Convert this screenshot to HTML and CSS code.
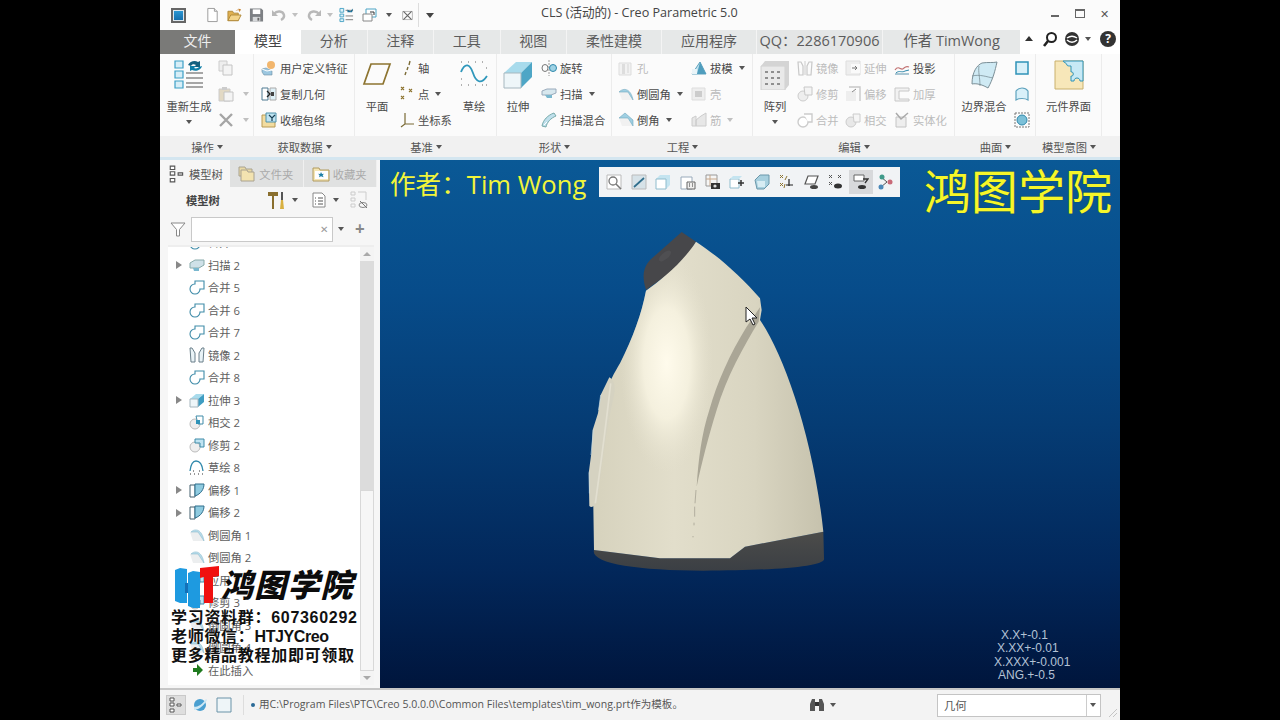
FILE: index.html
```html
<!DOCTYPE html>
<html lang="zh">
<head>
<meta charset="utf-8">
<title>CLS (活动的) - Creo Parametric 5.0</title>
<link rel="stylesheet" href="styles.css">
</head>
<body>
<svg class="defs" aria-hidden="true">
<defs>
<symbol id="doc" viewBox="0 0 16 16"><path d="M3 1h7l3 3v11H3z" fill="#fff" stroke="#999"/><path d="M10 1v3h3" fill="#eee" stroke="#999"/></symbol>
<symbol id="open" viewBox="0 0 16 16"><path d="M1 14V4h5l1 2h5v8z" fill="#e0b050" stroke="#b08a3a"/><path d="M1 14l3-6h11l-3 6z" fill="#f3d48a" stroke="#b08a3a"/><path d="M9 4c1-2 3-2 4-2l-1-1 3 1-2 3V3c-2 0-3 0-4 1z" fill="#c47a20"/></symbol>
<symbol id="save" viewBox="0 0 16 16"><path d="M1 1h12l2 2v12H1z" fill="#7d8084"/><path d="M4 2h8v5H4z" fill="#fff"/><path d="M4 10h8v5H4z" fill="#d6d8da"/><path d="M9 11h2v3H9z" fill="#666"/></symbol>
<symbol id="undo" viewBox="0 0 16 16"><path d="M3 7c3-4 9-3 10 1 .4 2-1 4-3 5" fill="none" stroke="#b8b8b8" stroke-width="2.4"/><path d="M1 3v6h6z" fill="#b8b8b8"/></symbol>
<symbol id="redo" viewBox="0 0 16 16"><path d="M13 7C10 3 4 4 3 8c-.4 2 1 4 3 5" fill="none" stroke="#b8b8b8" stroke-width="2.4"/><path d="M15 3v6H9z" fill="#b8b8b8"/></symbol>
<symbol id="regen-s" viewBox="0 0 16 16"><path d="M1 1h4v4H1zM1 7h4v3H1zM1 12h4v3H1z" fill="#dff1f8" stroke="#4aa3c4"/><path d="M7 3h8M7 9h8M7 13h8" stroke="#777"/><path d="M9 2l3 2 3-3-1 4H9z" fill="#1d6f96"/></symbol>
<symbol id="windows" viewBox="0 0 16 16"><path d="M4 2h10v8H4z" fill="#fff" stroke="#4aa3c4"/><path d="M1 7h9v7H1z" fill="#fff" stroke="#888"/><path d="M8 5h4v3" fill="none" stroke="#333"/></symbol>
<symbol id="closew" viewBox="0 0 16 16"><path d="M2 3h12v10H2z" fill="none" stroke="#aaa"/><path d="M3 3l10 10M13 3L3 13" stroke="#666" stroke-width="1.4"/></symbol>
<symbol id="regen" viewBox="0 0 30 30"><path d="M1 1h8v7H1zM1 11h8v7H1zM1 21h8v7H1z" fill="#d7eef7" stroke="#3d9fc6" stroke-width="1.2"/><path d="M12 14h17M12 19h17M12 24h17M12 28h17" stroke="#8a8a8a" stroke-width="1.3" transform="translate(0 -1)"/><path d="M14 5c2-4 7-5 10-3l2-1v6h-6l2-2c-2-1-4-1-5 1z" fill="#14607f"/><path d="M28 6c-1 4-6 6-10 4l-2 1V6h6l-2 2c2 1 4 0 5-1z" fill="#0d7ea8"/></symbol>
<symbol id="copy" viewBox="0 0 16 16"><path d="M1 1h8v10H1z" fill="#eee" stroke="#ccc"/><path d="M5 5h9v10H5z" fill="#f4f4f4" stroke="#c4c4c4"/></symbol>
<symbol id="paste" viewBox="0 0 16 16"><path d="M1 3h11v12H1z" fill="#e2d9c4" stroke="#ccc"/><path d="M4 1h5v3H4z" fill="#ccc"/><path d="M6 6h9v9H6z" fill="#f4f4f4" stroke="#c4c4c4"/></symbol>
<symbol id="del" viewBox="0 0 16 16"><path d="M2 2l12 12M14 2L2 14" stroke="#a5a5a5" stroke-width="2.4"/></symbol>
<symbol id="udf" viewBox="0 0 16 16"><circle cx="10" cy="5" r="4" fill="#f2b66d"/><path d="M5 8l6 3v4H3l-2-3V9z" fill="#9cc7e0" stroke="#6b8ea3" stroke-width=".6"/><path d="M1 9l5 2 5-1" fill="none" stroke="#fff"/></symbol>
<symbol id="cgeom" viewBox="0 0 16 16"><path d="M1 2h6v12H1z" fill="#fff" stroke="#4f7b92"/><path d="M9 2h6v12H9z" fill="#dff1f8" stroke="#aaa"/><path d="M6 5l3 3-3 3" fill="none" stroke="#222" stroke-width="1.3"/><path d="M10 6h3v4h-3z" fill="#444"/></symbol>
<symbol id="shrink" viewBox="0 0 16 16"><path d="M1 3h13v12H1z" fill="#f2dca0" stroke="#b89a55"/><path d="M5 1h10v9H5z" fill="#bfe3f1" stroke="#4f91aa"/><path d="M8 3l3 3 3-3M11 6v3" stroke="#173f55" stroke-width="1.2" fill="none"/></symbol>
<symbol id="plane" viewBox="0 0 30 30"><path d="M9 4h19l-7 20H2z" fill="none" stroke="#8d7430" stroke-width="1.7"/></symbol>
<symbol id="axis" viewBox="0 0 16 16"><path d="M11 1l-1 4M9 7L8 10M7 12l-1 3" stroke="#7a6a35" stroke-width="1.4"/></symbol>
<symbol id="pt" viewBox="0 0 16 16"><path d="M2 1l3 3M5 1L2 4M10 3l3 3M13 3l-3 3M2 10l3 3M5 10l-3 3" stroke="#8d7430" stroke-width="1.1"/></symbol>
<symbol id="csys" viewBox="0 0 16 16"><path d="M6 1v11L2 15M6 12h9" fill="none" stroke="#7a6a35" stroke-width="1.2"/></symbol>
<symbol id="sketch" viewBox="0 0 30 30"><path d="M2 12C6 2 11 4 14 13s8 12 14 3" fill="none" stroke="#2f97bb" stroke-width="1.8"/><path d="M2 2h1M9 2h1M16 2h1M23 2h1M2 25h1M9 25h1M16 25h1M23 25h1M2 19h1M27 8h1M27 25h1" stroke="#666" stroke-width="1"/></symbol>
<symbol id="extrude" viewBox="0 0 30 30"><path d="M1 13L13 2h16L18 13z" fill="#a8dbec"/><path d="M18 13L29 2v15L18 28z" fill="#4ea6c6"/><path d="M1 13h17v15H1z" fill="#eef6f9" stroke="#a6b7bf"/></symbol>
<symbol id="revolve" viewBox="0 0 16 16"><path d="M8 0v16" stroke="#999" stroke-dasharray="2 1"/><ellipse cx="4" cy="8" rx="3" ry="3.5" fill="none" stroke="#777"/><ellipse cx="12" cy="8" rx="3.5" ry="3.5" fill="#9fd2e4" stroke="#2f88ab"/></symbol>
<symbol id="sweep" viewBox="0 0 16 16"><path d="M1 5l5-2h9v4l-5 2H1z" fill="#d7e7ee" stroke="#9ab"/><path d="M4 9h7v3H6z" fill="#7ab8cf"/></symbol>
<symbol id="sblend" viewBox="0 0 16 16"><path d="M1 14C2 8 7 3 13 1l2 3C10 6 6 10 5 15z" fill="#bfe0ec" stroke="#7aa"/><path d="M3 13l3-3" stroke="#fff"/></symbol>
<symbol id="hole" viewBox="0 0 16 16"><path d="M1 3h12v12H1z" fill="#f2f2f2" stroke="#ddd"/><path d="M4 4h3v10H4z" fill="#ddd"/><path d="M9 4h2v9H9z" fill="#e4e4e4"/></symbol>
<symbol id="round" viewBox="0 0 16 16"><path d="M1 6h9l5 8H4z" fill="#f1f1f1"/><path d="M1 6c5-5 12-3 14 8l-5-8z" fill="#9fcfe2" stroke="#6fa8bf" stroke-width=".6"/></symbol>
<symbol id="chamfer" viewBox="0 0 16 16"><path d="M1 6h9l5 8H4z" fill="#f1f1f1"/><path d="M1 6l6-5 8 7v6l-5-8z" fill="#9fcfe2" stroke="#6fa8bf" stroke-width=".6"/></symbol>
<symbol id="draft" viewBox="0 0 16 16"><path d="M1 14L9 2l6 12z" fill="#bfe2ef" stroke="#5ea2bd"/><path d="M9 2l-3 12h9z" fill="#4f9dbd"/><path d="M1 9h5v5H1z" fill="#e9f4f8"/></symbol>
<symbol id="shell" viewBox="0 0 16 16"><path d="M1 2h13v12H1z" fill="#eee" stroke="#ddd"/><path d="M4 5h7v6H4z" fill="#ccc"/></symbol>
<symbol id="rib" viewBox="0 0 16 16"><path d="M1 6l4-2v10H1zM5 8l5-4 5-3v13H5z" fill="#e7e7e7" stroke="#ccc"/></symbol>
<symbol id="pattern" viewBox="0 0 30 30"><path d="M1 6h24v24H1z" fill="#e9e9e9" stroke="#d0d0d0"/><path d="M1 6l4-5h24l-4 5zM25 6l4-5v24l-4 5z" fill="#d4d4d4"/><path d="M5 11h3v2H5zM11 11h3v2h-3zM17 11h3v2h-3zM5 17h3v2H5zM11 17h3v2h-3zM17 17h3v2h-3zM5 23h3v2H5zM11 23h3v2h-3zM17 23h3v2h-3z" fill="#8f8f8f"/></symbol>
<symbol id="mirror" viewBox="0 0 16 16"><path d="M1 2h3l2 4v9H2zM15 2h-3l-2 4v9h4z" fill="none" stroke="#c8c8c8" stroke-width="1.2"/><path d="M8 1v14" stroke="#ccc"/></symbol>
<symbol id="trim" viewBox="0 0 16 16"><circle cx="6" cy="10" r="5" fill="#eee" stroke="#ccc"/><path d="M7 1h8v8H8z" fill="#f4f4f4" stroke="#c8c8c8"/></symbol>
<symbol id="merge" viewBox="0 0 16 16"><circle cx="6" cy="10" r="5" fill="#fff" stroke="#ccc" stroke-width="1.4"/><path d="M7 2h8v8h-4" fill="#fff" stroke="#ccc" stroke-width="1.4"/></symbol>
<symbol id="extend" viewBox="0 0 16 16"><path d="M1 1h14v14H1z" fill="#eee" stroke="#ddd"/><path d="M6 4h9v9H6z" fill="#fafafa"/><path d="M7 8h5M10 6l2 2-2 2" stroke="#777" fill="none"/></symbol>
<symbol id="offset" viewBox="0 0 16 16"><path d="M1 5h10v10H1z" fill="#eee"/><path d="M4 1h11v14" fill="none" stroke="#c8c8c8" stroke-width="1.4"/><path d="M7 6l4-3" stroke="#888"/></symbol>
<symbol id="inter" viewBox="0 0 16 16"><circle cx="6" cy="10" r="5" fill="#e8e8e8" stroke="#ccc"/><path d="M8 2h7v8H9z" fill="#f5f5f5" stroke="#ccc"/></symbol>
<symbol id="project" viewBox="0 0 16 16"><path d="M1 14h14" stroke="#5b93ad"/><path d="M1 10c4-6 6 2 9-2 2-2 3-2 5-1" fill="none" stroke="#c06f6f" stroke-width="1.2"/><path d="M2 13c3-3 6 0 9-2l4-1" fill="none" stroke="#2f88ab"/></symbol>
<symbol id="thick" viewBox="0 0 16 16"><path d="M1 2h14v3H5v8h10v2H1z" fill="#f2f2f2" stroke="#c8c8c8"/></symbol>
<symbol id="solid" viewBox="0 0 16 16"><path d="M2 5h10v10H2z" fill="#eee" stroke="#c4c4c4"/><path d="M2 1l5 6 7-6" fill="none" stroke="#aaa" stroke-width="1.5"/></symbol>
<symbol id="blend" viewBox="0 0 30 30"><path d="M3 24C3 12 8 5 13 3c6-1 11 0 15-1-2 9-4 17-9 26-5-3-11-5-16-4z" fill="#cfeaf4" stroke="#7b8f97"/><path d="M10 6c-1 6 1 11 1 20M3 16c8-2 15 1 21 2" fill="none" stroke="#7b8f97" stroke-width=".8"/></symbol>
<symbol id="surf-a" viewBox="0 0 16 16"><path d="M2 2h12v12H2z" fill="#d8f0f9" stroke="#2f93b8" stroke-width="1.5"/></symbol>
<symbol id="surf-b" viewBox="0 0 16 16"><path d="M2 14V5c3-4 9-4 12 0v9c-3-2-9-2-12 0z" fill="#d8f0f9" stroke="#5ea2bd" stroke-width="1.2"/></symbol>
<symbol id="surf-c" viewBox="0 0 16 16"><path d="M1 1h14v14H1z" fill="none" stroke="#777" stroke-dasharray="2 1"/><circle cx="8" cy="8" r="5" fill="#7cc0d8" stroke="#2f88ab"/></symbol>
<symbol id="comp" viewBox="0 0 30 30"><path d="M1 1h28v28H1z" fill="#f7e7b9" stroke="#c9b06c"/><path d="M9 1h20v20h-3c0-4-6-4-6 0h-3v-5c3 1 3-5 0-4V6c-2 0-4 0-4-1 0-2-4-3-4-4z" fill="#c7e9f5" stroke="#2f93b8"/></symbol>
<symbol id="tree" viewBox="0 0 16 16"><path d="M2 1h4v3H2zM2 6h4v3H2zM2 12h4v3H2zM9 7h4v2H9z" fill="#fff" stroke="#555"/></symbol>
<symbol id="folder" viewBox="0 0 18 18"><path d="M1 2h6l1 2h6v7H1z" fill="#e9d9a5" stroke="#a9a290"/><path d="M3 5h6l1 2h6v9H3z" fill="#f3e3b0" stroke="#a9a290"/></symbol>
<symbol id="fav" viewBox="0 0 18 18"><path d="M1 3h6l1 2h9v11H1z" fill="#f5e6b5" stroke="#b09a5e"/><path d="M3 6h13v8H3z" fill="#fff"/><path d="M9 7l1 2 2-.3-1.400 1.600 1 2-2.600-1-2 1 .6-2L6 8.700 8.200 9z" fill="#1d7fa6"/></symbol>
<symbol id="tools" viewBox="0 0 18 18"><path d="M0 1h10v4H6v13H4V5H0z" fill="#8a6f2e"/><path d="M13 1h2v8h-2z" fill="#555"/><path d="M13 9h2l1 9h-4z" fill="#d8b041"/></symbol>
<symbol id="list" viewBox="0 0 16 16"><path d="M2 1h9l3 3v11H2z" fill="#fff" stroke="#888"/><path d="M4 6h1M7 6h5M4 9h1M7 9h5M4 12h1M7 12h5" stroke="#555"/></symbol>
<symbol id="settings-off" viewBox="0 0 18 18"><path d="M1 1h4v3H1zM1 7h4v3H1zM1 13h4v3H1zM8 1h8v8" fill="none" stroke="#ccc"/><ellipse cx="13" cy="14" rx="4" ry="2.500" fill="none" stroke="#888"/><path d="M10 10l7 7" stroke="#777"/></symbol>
<symbol id="filter" viewBox="0 0 16 16"><path d="M1 2h14L9.500 8.500V15h-3V8.500z" fill="#fff" stroke="#888"/></symbol>
<symbol id="t-sweep" viewBox="0 0 16 16"><path d="M1 6l5-3h9v5l-5 3H1z" fill="#cfe1e8" stroke="#8aa"/><path d="M4 11h6v3H5z" fill="#7ab8cf"/></symbol>
<symbol id="t-merge" viewBox="0 0 16 16"><circle cx="6" cy="10" r="5" fill="#fff" stroke="#3e8ba8" stroke-width="1.100"/><path d="M6 5V2h9v8h-4" fill="#fff" stroke="#3e8ba8" stroke-width="1.100"/></symbol>
<symbol id="t-mirror" viewBox="0 0 16 16"><path d="M1 1h2l3 5v9H2zM15 1h-2l-3 5v9h4z" fill="#e9f3f7" stroke="#6a7f8a"/></symbol>
<symbol id="t-extrude" viewBox="0 0 16 16"><path d="M1 7l6-5h8L9 7z" fill="#a8dbec"/><path d="M9 7l6-5v8l-6 5z" fill="#3f9dc2"/><path d="M1 7h8v8H1z" fill="#eef6f9" stroke="#a6b7bf"/></symbol>
<symbol id="t-inter" viewBox="0 0 16 16"><circle cx="6" cy="10" r="5" fill="#eee" stroke="#bbb"/><path d="M7 2h7v8H9z" fill="#fff" stroke="#3e8ba8"/><path d="M7 6h4v4H7z" fill="#2f93b8"/></symbol>
<symbol id="t-trim" viewBox="0 0 16 16"><circle cx="6" cy="10" r="5" fill="#eee" stroke="#bbb"/><path d="M6 2h9v8h-4V6H6z" fill="#bfe3f1" stroke="#3e8ba8"/></symbol>
<symbol id="t-sketch" viewBox="0 0 16 16"><path d="M1 12c1-8 3-10 6-10s6 2 7 10" fill="none" stroke="#2f88ab" stroke-width="1.300"/><path d="M1 15h1M5 15h1M9 15h1M13 15h1M4 12h1M10 12h1" stroke="#333"/></symbol>
<symbol id="t-offset" viewBox="0 0 16 16"><path d="M1 3h5v12H1z" fill="#fff" stroke="#44606e"/><path d="M6 2h9c0 5-3 10-9 12z" fill="#8fcbe0" stroke="#2f6e8c"/></symbol>
<symbol id="t-round" viewBox="0 0 16 16"><path d="M1 5h8l6 9H4z" fill="#eceeef"/><path d="M2 5c4-4 11-3 13 9l-6-9z" fill="#b7dcea" stroke="#7fb1c6" stroke-width=".5"/></symbol>
<symbol id="v1" viewBox="0 0 16 16"><path d="M1 1h14v14H1z" fill="#fff" stroke="#bbb"/><circle cx="7" cy="7" r="4" fill="none" stroke="#777" stroke-width="1.300"/><path d="M10 10l5 5" stroke="#777" stroke-width="1.500"/></symbol>
<symbol id="v2" viewBox="0 0 16 16"><path d="M1 1h14v14H1z" fill="#d6e2e8" stroke="#bbb"/><path d="M3 13L13 4" stroke="#2f6e8c" stroke-width="1.700"/></symbol>
<symbol id="v3" viewBox="0 0 16 16"><path d="M1 5l4-4h10v10l-4 4H1z" fill="#c4e4f0"/><path d="M1 5h10v10H1z" fill="#fff" stroke="#8fbccd"/></symbol>
<symbol id="v4" viewBox="0 0 16 16"><path d="M1 3h11v12H1z" fill="#fff" stroke="#9ab"/><path d="M7 8h8v7H7z" fill="#eee" stroke="#666"/><path d="M9 10h1M12 10h1M9 12h1M12 12h1" stroke="#333"/></symbol>
<symbol id="v5" viewBox="0 0 16 16"><path d="M1 1h11v11H1z" fill="#f5f5f5" stroke="#999"/><path d="M1 5h11M5 1v11" stroke="#c7a78a"/><path d="M6 9h9v6H6z" fill="#333"/><circle cx="10" cy="12" r="1.600" fill="#ddd"/></symbol>
<symbol id="v6" viewBox="0 0 16 16"><path d="M1 5h9v9H1z" fill="#fff" stroke="#8fbccd"/><path d="M1 5l3-3h9l-3 3z" fill="#c4e4f0"/><path d="M9 9h6M12 6v6" stroke="#333" stroke-width="1.500"/></symbol>
<symbol id="v7" viewBox="0 0 16 16"><path d="M1 6l5-5h9v9l-5 5H3z" fill="#a7cfde" stroke="#6a97aa"/><path d="M3 7h8v6H4z" fill="#d7ecf3"/></symbol>
<symbol id="v8" viewBox="0 0 16 16"><path d="M1 1l3 3M4 1L1 4M8 2L6 6M1 9l3 3M4 9l-3 3M6 10l-1 4" stroke="#8d7430"/><path d="M10 5v7M7 11h7" stroke="#222" stroke-width="1.200"/></symbol>
<symbol id="v9" viewBox="0 0 16 16"><path d="M4 2h10l-3 8H1z" fill="#fff" stroke="#555" stroke-width="1.200"/><ellipse cx="10" cy="13" rx="4" ry="2" fill="#444"/></symbol>
<symbol id="v10" viewBox="0 0 16 16"><path d="M1 1l3 3M4 1L1 4M10 1l3 3M13 1l-3 3M1 8l3 3M4 8l-3 3" stroke="#555"/><ellipse cx="10" cy="12" rx="4" ry="2.500" fill="#333"/></symbol>
<symbol id="v11" viewBox="0 0 16 16"><path d="M1 1h10v6H1z" fill="#fff" stroke="#666"/><path d="M10 5h5l-3 4" fill="none" stroke="#333" stroke-width="1.300"/><ellipse cx="9" cy="13" rx="4" ry="2" fill="#333"/></symbol>
<symbol id="v12" viewBox="0 0 16 16"><path d="M3 3l6 5-6 5" fill="none" stroke="#555"/><circle cx="4" cy="3" r="2.500" fill="#3f9a8a"/><circle cx="3" cy="13" r="2.500" fill="#4a88b8"/><circle cx="12" cy="8" r="2.500" fill="#c86a78"/></symbol>
<symbol id="globe" viewBox="0 0 16 16"><circle cx="8" cy="8" r="6" fill="#4a9fd0"/><path d="M2 10c4 0 9-3 12-8l1 1C12 9 6 13 2 13z" fill="#cfe8f4"/></symbol>
<symbol id="rect" viewBox="0 0 16 16"><path d="M1 1h14v14H1z" fill="#eef5f8" stroke="#6b93a8"/></symbol>
<symbol id="bino" viewBox="0 0 16 16"><path d="M1 7l2-5h3v12H1zM15 7l-2-5h-3v12h5z" fill="#555"/><path d="M6 5h4v4H6z" fill="#333"/></symbol>
</defs>
</svg>

<div class="app">
  <header class="titlebar">
    <span class="appicon"></span>
    <div class="qat">
      <svg class="q"><use href="#doc"/></svg>
      <svg class="q"><use href="#open"/></svg>
      <svg class="q"><use href="#save"/></svg>
      <svg class="q qn"><use href="#undo"/></svg><i class="car lt c1"></i>
      <svg class="q qn"><use href="#redo"/></svg><i class="car lt c2"></i>
      <svg class="q qr"><use href="#regen-s"/></svg>
      <svg class="q qn"><use href="#windows"/></svg><i class="car c3"></i>
      <svg class="q qx"><use href="#closew"/></svg>
      <span class="qsep"></span>
      <i class="car under"></i>
    </div>
    <div class="wintitle">CLS (活动的) - Creo Parametric 5.0</div>
    <div class="winbtns"><span class="wmin"></span><span class="wmax"></span><span class="wclose">✕</span></div>
  </header>

  <nav class="tabs">
    <span class="tab file">文件</span>
    <span class="tab on">模型</span>
    <span class="tab">分析</span>
    <span class="tab">注释</span>
    <span class="tab">工具</span>
    <span class="tab">视图</span>
    <span class="tab w4">柔性建模</span>
    <span class="tab w4">应用程序</span>
    <span class="tab qq">QQ：2286170906</span>
    <span class="tab auth">作者 TimWong</span>
    <div class="helpers">
      <span class="up"></span>
      <svg class="hs" viewBox="0 0 16 16"><circle cx="9.500" cy="6.500" r="4.500" fill="none" stroke="#222" stroke-width="2"/><path d="M6 10l-4 5" stroke="#222" stroke-width="2.600"/></svg>
      <svg class="hs" viewBox="0 0 16 16"><circle cx="8" cy="8" r="7" fill="#333"/><path d="M3 7c3-2 7-2 10 0M3 9c3 3 7 3 10 0" fill="none" stroke="#fff" stroke-width="1.500"/></svg>
      <i class="car"></i>
      <span class="q-help">?</span>
    </div>
  </nav>

  <section class="ribbon">
    <div class="grp g-op">
      <div class="gb">
        <div class="big w58"><svg class="bi"><use href="#regen"/></svg><span>重新生成</span><i class="car"></i></div>
        <div class="col">
          <div class="ri"><svg class="si"><use href="#copy"/></svg></div>
          <div class="ri"><svg class="si"><use href="#paste"/></svg><i class="car lt"></i></div>
          <div class="ri"><svg class="si"><use href="#del"/></svg><i class="car lt"></i></div>
        </div>
      </div>
      <div class="gl">操作<i class="car"></i></div>
    </div>
    <div class="grp g-get">
      <div class="gb pl7">
        <div class="col">
          <div class="ri"><svg class="si"><use href="#udf"/></svg>用户定义特征</div>
          <div class="ri"><svg class="si"><use href="#cgeom"/></svg>复制几何</div>
          <div class="ri"><svg class="si"><use href="#shrink"/></svg>收缩包络</div>
        </div>
      </div>
      <div class="gl">获取数据<i class="car"></i></div>
    </div>
    <div class="grp g-dat">
      <div class="gb">
        <div class="big w44"><svg class="bi"><use href="#plane"/></svg><span>平面</span></div>
        <div class="col w53">
          <div class="ri"><svg class="si"><use href="#axis"/></svg>轴</div>
          <div class="ri"><svg class="si"><use href="#pt"/></svg>点<i class="car"></i></div>
          <div class="ri"><svg class="si"><use href="#csys"/></svg>坐标系</div>
        </div>
        <div class="big w44"><svg class="bi"><use href="#sketch"/></svg><span>草绘</span></div>
      </div>
      <div class="gl">基准<i class="car"></i></div>
    </div>
    <div class="grp g-sha">
      <div class="gb">
        <div class="big w42"><svg class="bi"><use href="#extrude"/></svg><span>拉伸</span></div>
        <div class="col pl2">
          <div class="ri"><svg class="si"><use href="#revolve"/></svg>旋转</div>
          <div class="ri"><svg class="si"><use href="#sweep"/></svg>扫描<i class="car"></i></div>
          <div class="ri"><svg class="si"><use href="#sblend"/></svg>扫描混合</div>
        </div>
      </div>
      <div class="gl">形状<i class="car"></i></div>
    </div>
    <div class="grp g-eng">
      <div class="gb pl6">
        <div class="col w73">
          <div class="ri dis"><svg class="si"><use href="#hole"/></svg>孔</div>
          <div class="ri"><svg class="si"><use href="#round"/></svg>倒圆角<i class="car"></i></div>
          <div class="ri"><svg class="si"><use href="#chamfer"/></svg>倒角<i class="car"></i></div>
        </div>
        <div class="col">
          <div class="ri"><svg class="si"><use href="#draft"/></svg>拔模<i class="car"></i></div>
          <div class="ri dis"><svg class="si"><use href="#shell"/></svg>壳</div>
          <div class="ri dis"><svg class="si"><use href="#rib"/></svg>筋<i class="car lt"></i></div>
        </div>
      </div>
      <div class="gl">工程<i class="car"></i></div>
    </div>
    <div class="grp g-edit">
      <div class="gb">
        <div class="big w44"><svg class="bi"><use href="#pattern"/></svg><span>阵列</span><i class="car"></i></div>
        <div class="col w48">
          <div class="ri dis"><svg class="si"><use href="#mirror"/></svg>镜像</div>
          <div class="ri dis"><svg class="si"><use href="#trim"/></svg>修剪</div>
          <div class="ri dis"><svg class="si"><use href="#merge"/></svg>合并</div>
        </div>
        <div class="col w49">
          <div class="ri dis"><svg class="si"><use href="#extend"/></svg>延伸</div>
          <div class="ri dis"><svg class="si"><use href="#offset"/></svg>偏移</div>
          <div class="ri dis"><svg class="si"><use href="#inter"/></svg>相交</div>
        </div>
        <div class="col">
          <div class="ri"><svg class="si"><use href="#project"/></svg>投影</div>
          <div class="ri dis"><svg class="si"><use href="#thick"/></svg>加厚</div>
          <div class="ri dis"><svg class="si"><use href="#solid"/></svg>实体化</div>
        </div>
      </div>
      <div class="gl">编辑<i class="car"></i></div>
    </div>
    <div class="grp g-srf">
      <div class="gb">
        <div class="big w58"><svg class="bi"><use href="#blend"/></svg><span>边界混合</span></div>
        <div class="col c-ic">
          <div class="ri"><svg class="si"><use href="#surf-a"/></svg></div>
          <div class="ri"><svg class="si"><use href="#surf-b"/></svg></div>
          <div class="ri"><svg class="si"><use href="#surf-c"/></svg></div>
        </div>
      </div>
      <div class="gl">曲面<i class="car"></i></div>
    </div>
    <div class="grp g-int">
      <div class="gb">
        <div class="big full"><svg class="bi"><use href="#comp"/></svg><span>元件界面</span></div>
      </div>
      <div class="gl">模型意图<i class="car"></i></div>
    </div>
    <div class="grp g-rest"><div class="gb"></div><div class="gl"></div></div>
  </section>

  <main class="main">
    <aside class="panel">
      <div class="ptabs">
        <span class="ptab on"><svg class="pi"><use href="#tree"/></svg>模型树</span>
        <span class="ptab"><svg class="pi"><use href="#folder"/></svg><em>文件夹</em></span>
        <span class="ptab"><svg class="pi"><use href="#fav"/></svg><em>收藏夹</em></span>
      </div>
      <div class="ptool">
        <b>模型树</b>
        <svg class="pt-i"><use href="#tools"/></svg><i class="car"></i>
        <svg class="pt-i p2"><use href="#list"/></svg><i class="car"></i>
        <svg class="pt-i p3"><use href="#settings-off"/></svg>
      </div>
      <div class="psearch">
        <svg class="fi"><use href="#filter"/></svg>
        <div class="input"><span>✕</span></div>
        <i class="car"></i>
        <span class="plus">+</span>
      </div>
      <div class="treewrap">
        <div class="tree">
          <div class="row"><svg class="ti"><use href="#t-merge"/></svg>合并 4</div>
          <div class="row"><i class="exp"></i><svg class="ti"><use href="#t-sweep"/></svg>扫描 2</div>
          <div class="row"><svg class="ti"><use href="#t-merge"/></svg>合并 5</div>
          <div class="row"><svg class="ti"><use href="#t-merge"/></svg>合并 6</div>
          <div class="row"><svg class="ti"><use href="#t-merge"/></svg>合并 7</div>
          <div class="row"><svg class="ti"><use href="#t-mirror"/></svg>镜像 2</div>
          <div class="row"><svg class="ti"><use href="#t-merge"/></svg>合并 8</div>
          <div class="row"><i class="exp"></i><svg class="ti"><use href="#t-extrude"/></svg>拉伸 3</div>
          <div class="row"><svg class="ti"><use href="#t-inter"/></svg>相交 2</div>
          <div class="row"><svg class="ti"><use href="#t-trim"/></svg>修剪 2</div>
          <div class="row"><svg class="ti"><use href="#t-sketch"/></svg>草绘 8</div>
          <div class="row"><i class="exp"></i><svg class="ti"><use href="#t-offset"/></svg>偏移 1</div>
          <div class="row"><i class="exp"></i><svg class="ti"><use href="#t-offset"/></svg>偏移 2</div>
          <div class="row"><svg class="ti"><use href="#t-round"/></svg>倒圆角 1</div>
          <div class="row"><svg class="ti"><use href="#t-round"/></svg>倒圆角 2</div>
          <div class="row"><svg class="ti"><use href="#t-trim"/></svg>应用 1</div>
          <div class="row"><svg class="ti"><use href="#t-trim"/></svg>修剪 3</div>
          <div class="row"><svg class="ti"><use href="#t-round"/></svg>倒圆角 3</div>
          <div class="row"><svg class="ti"><use href="#t-round"/></svg>倒圆角 4</div>
          <div class="row"><svg class="ti ins" viewBox="0 0 16 16"><path d="M4 6h4V2l6 6-6 6v-4H4z" fill="#1e7a1e"/></svg>在此插入</div>
        </div>
        <div class="sbar"><span class="sb-up"></span><span class="sb-track"></span><span class="sb-thumb"></span><span class="sb-dn"></span></div>
      </div>
      <div class="wm">
        <div class="wm-top">
          <svg class="wm-logo" viewBox="0 0 44 42"><path d="M0 4l5-2 7 1v34H5l-5-2z" fill="#1e9ae0"/><path d="M10 17h5v10h-5z" fill="#1470b8"/><path d="M13 7l5-2 7 1v36h-7l-5-2z" fill="#1e9ae0"/><path d="M25 2l19-2v10l-6 1v26l-9 0V11l-4 1z" fill="#f01010"/></svg>
          <span>鸿图学院</span>
        </div>
        <div class="wm-l">学习资料群：607360292</div>
        <div class="wm-l">老师微信：<span class="tight">HTJYCreo</span></div>
        <div class="wm-l">更多精品教程加即可领取</div>
      </div>
    </aside>
    <section class="view">
      <div class="author">作者：Tim Wong</div>
      <div class="vtool">
        <svg><use href="#v1"/></svg><svg><use href="#v2"/></svg><svg><use href="#v3"/></svg><svg><use href="#v4"/></svg><svg><use href="#v5"/></svg><svg><use href="#v6"/></svg><svg><use href="#v7"/></svg><svg><use href="#v8"/></svg><svg><use href="#v9"/></svg><svg><use href="#v10"/></svg><svg class="act"><use href="#v11"/></svg><svg><use href="#v12"/></svg>
      </div>
      <div class="brand">鸿图学院</div>
      <svg class="model" viewBox="0 0 810 1110">
        <defs>
          <linearGradient id="bodyg" x1="0" x2="1" y1="0" y2="0">
            <stop offset="0" stop-color="#d6d2bd"/><stop offset=".35" stop-color="#e2decb"/><stop offset=".7" stop-color="#d9d5c1"/><stop offset="1" stop-color="#c6c2ad"/>
          </linearGradient>
          <radialGradient id="hl" gradientUnits="userSpaceOnUse" cx="290" cy="430" r="330" gradientTransform="translate(290 430) scale(.42 1) translate(-290 -430)">
            <stop offset="0" stop-color="#fffbec"/><stop offset=".5" stop-color="#f8f4e2" stop-opacity=".85"/><stop offset="1" stop-color="#e6e2cf" stop-opacity="0"/>
          </radialGradient>
          <linearGradient id="bandg" x1="0" x2="0" y1="0" y2="1"><stop offset="0" stop-color="#4c4c4a"/><stop offset="1" stop-color="#3b3f44"/></linearGradient>
        </defs>
        <path d="M72 990C60 1030 200 1052 400 1052S770 1040 762 1015L760 935 525 980 480 1015 270 1015z" fill="url(#bandg)"/>
        <path d="M228 210C216 170 218 145 240 120L335 36 378 65 340 130z" fill="#47474a"/>
        <ellipse cx="285" cy="108" rx="22" ry="10" transform="rotate(-40 285 108)" fill="#4f4f52"/>
        <path d="M228 212C275 180 340 125 378 65 440 105 515 170 570 235L575 270 570 300C640 400 730 650 760 935L525 980 480 1015 270 1015 72 990 70 860C70 760 70 660 100 540 115 490 135 455 150 430 190 350 215 280 228 212z" fill="url(#bodyg)"/>
        <path d="M228 212C275 180 340 125 378 65 440 105 515 170 570 235L575 270 570 300C640 400 730 650 760 935L525 980 480 1015 270 1015 72 990 70 860C70 760 70 660 100 540 115 490 135 455 150 430 190 350 215 280 228 212z" fill="url(#hl)"/>
        <path d="M570 262L566 305C520 380 470 470 440 570 415 650 395 730 380 800 385 720 395 640 418 570 440 490 480 400 530 320z" fill="#aaa696"/>
        <path d="M378 810L375 850M374 860v30M372 908v8M369 948v4" stroke="#8a8678" stroke-width="1.600" fill="none"/>
        <path d="M118 472C134 480 138 505 130 535 108 630 94 750 82 838 76 862 64 864 58 858L56 760 64 700 68 630 84 580 92 525z" fill="#d5d2c1"/>
        <path d="M122 490C112 580 94 720 76 850" stroke="#e2dfd0" stroke-width="5" fill="none"/>
        <path d="M92 525L86 570M70 630L63 705M58 755V820" stroke="#c4dbe4" stroke-width="2" fill="none"/>
      </svg>
      <svg class="cursor" viewBox="0 0 14 20"><path d="M1 1v15l4-3 3 6 2-1-3-6h5z" fill="#fff" stroke="#222"/></svg>
      <div class="tol">
        <div class="t1">X.X+-0.1</div>
        <div class="t2">X.XX+-0.01</div>
        <div class="t3">X.XXX+-0.001</div>
        <div class="t4">ANG.+-0.5</div>
      </div>
    </section>
  </main>

  <footer class="status">
    <span class="sbtn act"><svg class="si"><use href="#tree"/></svg></span>
    <span class="sbtn"><svg class="si"><use href="#globe"/></svg></span>
    <span class="sbtn"><svg class="si"><use href="#rect"/></svg></span>
    <span class="ssep"></span>
    <span class="dot"></span>
    <span class="msg">用C:\Program Files\PTC\Creo 5.0.0.0\Common Files\templates\tim_wong.prt作为模板。</span>
    <svg class="si bino"><use href="#bino"/></svg><i class="car"></i>
    <div class="select"><span>几何</span><em><i class="car"></i></em></div>
    <svg class="grip" viewBox="0 0 12 12"><path d="M11 3l-8 8M11 7l-4 4" stroke="#c4c4c4"/></svg>
  </footer>
</div>
</body>
</html>
```

FILE: styles.css
```css
* { box-sizing: border-box; }
html, body { margin: 0; height: 100%; background: #000; overflow: hidden; }
body { font-family: "Open Sans", "Noto Sans CJK SC", sans-serif; font-size: 11.3px; color: #444; }
.defs { position: absolute; width: 0; height: 0; }
i, em { font-style: normal; }
svg { display: block; flex: none; }

.app { width: 960px; height: 720px; margin: 0 auto; display: flex; flex-direction: column; background: #fafafa; position: relative; overflow: hidden; }

.car { display: inline-block; width: 0; height: 0; border: 3.5px solid transparent; border-top: 4px solid #555; border-bottom: 0; margin-left: 6px; flex: none; }
.car.lt { border-top-color: #c0c0c0; }
.car.under { border-top-color: #444; border-left-width: 4px; border-right-width: 4px; border-top-width: 5px; margin-left: 7px; }

.titlebar { height: 30px; flex: none; display: flex; align-items: center; background: #fbfbfb; position: relative; }
.appicon { width: 15px; height: 15px; margin-left: 11px; border: 2px solid #666; background: linear-gradient(#2c9ad6, #126aa8); box-shadow: inset 0 0 0 1px #dfe8ee; flex: none; }
.qat { display: flex; align-items: center; margin-left: 19px; height: 24px; }
.q { width: 15px; height: 16px; margin-right: 7px; }
.q.qn { width: 16px; margin-right: 0; }
.car.c1 { margin: 0 8px 0 5px; }
.car.c2 { margin: 0 6px 0 5px; }
.car.c3 { margin: 0 9px 0 8px; }
.q.qr { margin-right: 8px; }
.q.qx { width: 13px; height: 13px; margin-right: 4px; }
.qsep { width: 1px; height: 24px; background: #ddd; }
.wintitle { position: absolute; left: 381px; top: 4px; font-size: 12.600px; color: #444; white-space: nowrap; line-height: 18px; }
.winbtns { margin-left: auto; display: flex; align-items: center; height: 30px; padding: 0 8px 4px 0; }
.wmin { width: 8px; height: 2px; background: #666; margin: 5px 16px 0 0; }
.wmax { width: 10px; height: 9px; border: 1px solid #666; border-top-width: 2px; margin-right: 15px; }
.wclose { font-size: 11px; color: #555; width: 12px; }

.tabs { height: 24px; flex: none; display: flex; background: #fff; font-size: 14px; color: #5c5c5c; }
.tab { width: 66.500px; background: #e6e8e8; display: flex; align-items: center; justify-content: center; border-right: 1px solid #f4f4f4; padding-bottom: 2px; line-height: 20px; white-space: nowrap; }
.tab.file { width: 75px; background: #7a7a78; color: #eee; border: 0; }
.tab.on { background: #fff; color: #444; border: 0; width: 66px; }
.tab.w4 { width: 95px; }
.tab.qq { width: 126px; background: #e4e6e6; font-size: 14.500px; font-family: "Open Sans", "Noto Sans CJK TC", sans-serif; }
.tab.auth { width: 137px; border: 0; font-size: 14.500px; }
.helpers { flex: 1; display: flex; align-items: center; background: #fff; padding-left: 5px; }
.up { width: 0; height: 0; border: 4px solid transparent; border-bottom: 5px solid #333; border-top: 0; margin: 0 9px 8px 0; }
.hs { width: 16px; height: 16px; margin-right: 6px; margin-top: -6px; }
.helpers .car { margin: -6px 9px 0 -1px; }
.q-help { width: 16px; height: 16px; border-radius: 50%; background: #333; color: #fff; font: bold 12px/16px "Open Sans", sans-serif; text-align: center; margin-top: -6px; }

.ribbon { height: 106px; flex: none; display: flex; background: #fbfbfb; border-bottom: 3px solid #d4e6f0; }
.grp { display: flex; flex-direction: column; border-right: 1px solid #ececec; flex: none; }
.g-op { width: 94px; } .g-get { width: 101px; } .g-dat { width: 142px; } .g-sha { width: 115px; }
.g-eng { width: 141px; } .g-edit { width: 202px; } .g-srf { width: 81px; } .g-int { width: 66px; } .g-rest { width: 18px; border: 0; }
.gb { height: 82px; display: flex; padding-top: 1px; }
.gl { flex: 1; background: #f1f1f1; display: flex; align-items: center; justify-content: center; color: #555; margin-right: -1px; }
.gl .car { margin-left: 3px; }
.pl7 { padding-left: 7px; } .pl6 { padding-left: 6px; } .pl2 { padding-left: 2px; }
.col { display: flex; flex-direction: column; flex: none; }
.w53 { width: 53px; } .w73 { width: 73px; } .w48 { width: 48px; } .w49 { width: 49px; }
.ri { height: 26px; display: flex; align-items: center; white-space: nowrap; color: #4a4a4a; }
.ri.dis { color: #bcbcbc; }
.si { width: 16px; height: 16px; margin-right: 3px; }
.big { display: flex; flex-direction: column; align-items: center; padding-top: 5px; flex: none; white-space: nowrap; color: #4a4a4a; }
.big span { margin-top: 8px; line-height: 17px; }
.big .car { margin: 5px 0 0; }
.bi { width: 30px; height: 30px; }
.w58 { width: 58px; } .w44 { width: 44px; } .w42 { width: 42px; }
.full { width: 100%; }
.c-ic { margin-left: 1px; }

.main { flex: 1; min-height: 0; display: flex; }
.panel { width: 220px; flex: none; display: flex; flex-direction: column; background: #f6f6f6; position: relative; padding-right: 3px; }
.ptabs { height: 27px; flex: none; display: flex; background: #e0e1e1; }
.ptab { width: 74px; display: flex; align-items: center; padding-left: 8px; color: #555; border-right: 1px solid #f0f0f0; }
.ptab em { color: #aaa; }
.ptab.on { width: 71px; background: #f6f6f6; border: 0; }
.pi { width: 18px; height: 18px; margin-right: 3px; }
.ptool { height: 26px; flex: none; display: flex; align-items: center; padding-left: 26px; }
.ptool b { font-weight: 600; color: #444; width: 82px; }
.pt-i { width: 18px; height: 18px; }
.ptool .car { margin-left: 6px; margin-right: 13px; }
.pt-i.p2 { width: 16px; height: 16px; }
.pt-i.p3 { margin-left: -2px; }
.psearch { height: 32px; flex: none; display: flex; align-items: center; padding-left: 10px; }
.fi { width: 16px; height: 16px; margin-right: 5px; }
.input { width: 142px; height: 25px; background: #fff; border: 1px solid #c9c9c9; display: flex; align-items: center; justify-content: flex-end; padding-right: 4px; color: #999; font-size: 10px; }
.psearch .car { margin-left: 5px; }
.plus { font-size: 17px; font-weight: 700; color: #888; margin-left: 11px; line-height: 16px; }
.treewrap { flex: 1; min-height: 0; background: #fff; margin: 0 3px 3px 8px; position: relative; overflow: hidden; border-top: 2px solid #eee; }
.tree { margin-top: -16px; padding-right: 14px; color: #5e5e5e; }
.row { height: 22.500px; display: flex; align-items: center; padding-left: 21px; position: relative; white-space: nowrap; font-size: 11.300px; }
.row .ti { width: 16px; height: 16px; margin-right: 3px; }
.exp { position: absolute; left: 8px; top: 7.500px; width: 0; height: 0; border: 4px solid transparent; border-left: 6px solid #888; border-right: 0; }
.sbar { position: absolute; right: 0; top: 0; bottom: 0; width: 14px; background: #e2e2e2; display: flex; flex-direction: column; }
.sb-up, .sb-dn { height: 14px; background: #f4f4f4; display: flex; align-items: center; justify-content: center; flex: none; }
.sb-up::after { content: ""; border: 4px solid transparent; border-bottom: 4px solid #aaa; border-top: 0; }
.sb-dn::after { content: ""; border: 4px solid transparent; border-top: 4px solid #aaa; border-bottom: 0; }
.sb-track { height: 229px; flex: none; background: #dcdcdc; }
.sb-thumb { flex: 1; background: #f6f6f6; border: 1px solid #d8d8d8; }

.wm { position: absolute; left: 11px; top: 406px; width: 205px; color: #111; font-weight: 700; }
.wm-top { display: flex; align-items: flex-start; height: 41.500px; margin-left: 4px; }
.wm-logo { width: 44px; height: 42px; }
.wm-top span { font-size: 32px; line-height: 38px; font-style: italic; font-weight: 900; letter-spacing: 1.200px; margin-left: 2px; white-space: nowrap; color: #0c0c0c; }
.wm-l { font-size: 16px; line-height: 19px; white-space: nowrap; letter-spacing: .7px; font-family: "Liberation Sans", "Noto Sans CJK SC", sans-serif; }
.tight { letter-spacing: -.4px; }

.view { flex: 1; position: relative; background: linear-gradient(#0a5996 0%, #074c8a 25%, #053c74 50%, #02275a 78%, #00153c 100%); overflow: hidden; }
.author { position: absolute; left: 10px; top: 8px; color: #f2f53a; font-size: 25.600px; line-height: 34px; white-space: nowrap; font-family: "Open Sans", "Noto Sans CJK TC", sans-serif; }
.vtool { position: absolute; left: 219px; top: 7px; width: 301px; height: 30px; background: #f1f3f5; display: flex; align-items: center; padding-left: 7px; gap: 8.700px; }
.vtool svg { width: 16px; height: 16px; }
.vtool svg.act { outline: 4px solid #d8d9db; background: #d8d9db; }
.brand { position: absolute; left: 544px; top: 1px; font-size: 46.800px; line-height: 60px; color: #f6f62a; font-weight: 400; white-space: nowrap; letter-spacing: .3px; text-shadow: 0 0 1px #28501a; }
.model { position: absolute; left: 190px; top: 60px; width: 270px; height: 370px; }
.cursor { position: absolute; left: 365px; top: 146px; width: 14px; height: 20px; }
.tol { position: absolute; left: 614px; top: 469px; font-size: 12px; line-height: 13.400px; color: #b4c2d6; font-family: "Liberation Sans", sans-serif; white-space: nowrap; }
.t1 { margin-left: 7px; } .t2 { margin-left: 3px; } .t4 { margin-left: 4px; }

.status { height: 32px; flex: none; display: flex; align-items: center; background: #f3f3f3; border-top: 2px solid #c6c6c6; padding-left: 6px; position: relative; }
.sbtn { width: 20px; height: 20px; display: flex; align-items: center; justify-content: center; margin-right: 4px; }
.sbtn .si { margin: 0; }
.sbtn.act { background: #dedede; border: 1px solid #c9c9c9; }
.ssep { width: 1px; height: 20px; background: #ddd; margin: 0 7px 0 5px; }
.dot { width: 4px; height: 4px; border-radius: 50%; background: #2a6a96; margin-right: 4px; }
.msg { color: #555; font-size: 10.550px; width: 550px; white-space: nowrap; margin-top: -3px; }
.bino { margin: 0; }
.status .car { margin-left: 5px; }
.select { margin-left: 101px; width: 164px; height: 23px; background: #fff; border: 1px solid #c4c4c4; display: flex; align-items: center; justify-content: space-between; padding-left: 6px; color: #555; }
.select em { width: 14px; height: 21px; border-left: 1px solid #ccc; display: flex; align-items: center; }
.select .car { margin-left: 3px; }
.grip { position: absolute; right: 2px; bottom: 2px; width: 12px; height: 12px; }
```
